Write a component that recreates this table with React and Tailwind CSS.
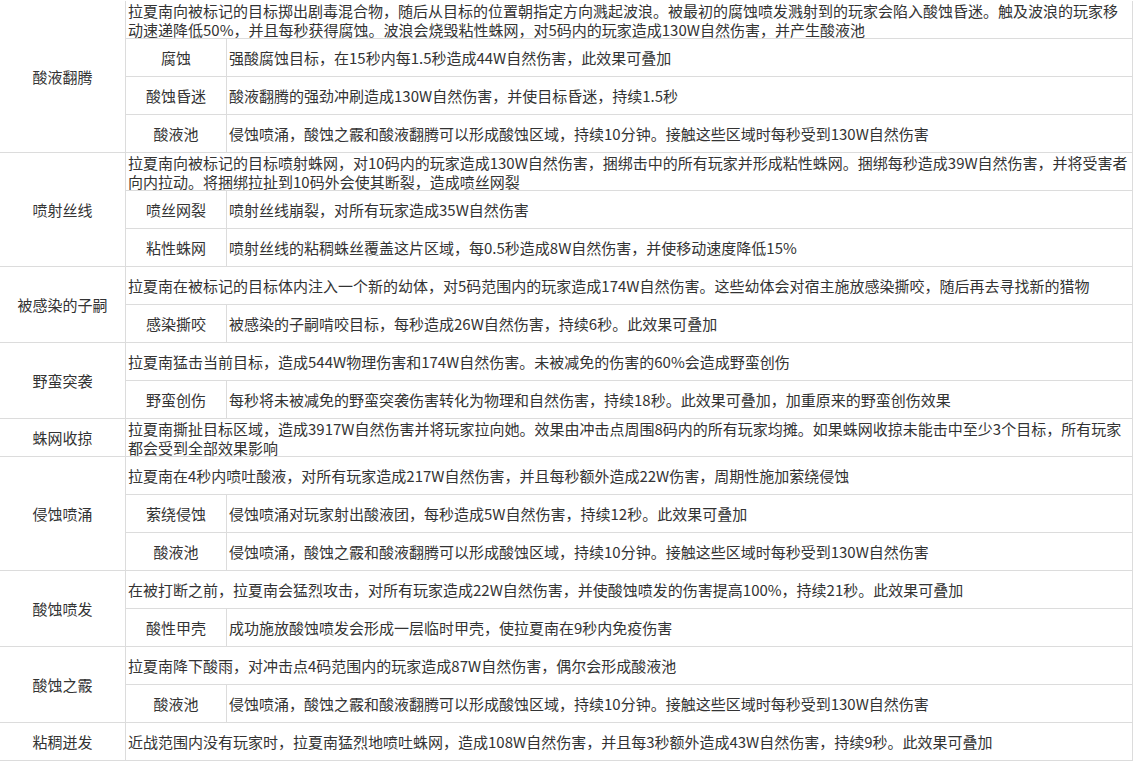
import React from 'react';

const POOL = '侵蚀喷涌，酸蚀之霰和酸液翻腾可以形成酸蚀区域，持续10分钟。接触这些区域时每秒受到130W自然伤害';

const skills = [
    {
        name: '酸液翻腾',
        desc: '拉夏南向被标记的目标掷出剧毒混合物，随后从目标的位置朝指定方向溅起波浪。被最初的腐蚀喷发溅射到的玩家会陷入酸蚀昏迷。触及波浪的玩家移动速递降低50%，并且每秒获得腐蚀。波浪会烧毁粘性蛛网，对5码内的玩家造成130W自然伤害，并产生酸液池',
        subs: [
            ['腐蚀', '强酸腐蚀目标，在15秒内每1.5秒造成44W自然伤害，此效果可叠加'],
            ['酸蚀昏迷', '酸液翻腾的强劲冲刷造成130W自然伤害，并使目标昏迷，持续1.5秒'],
            ['酸液池', POOL],
        ],
    },
    {
        name: '喷射丝线',
        desc: '拉夏南向被标记的目标喷射蛛网，对10码内的玩家造成130W自然伤害，捆绑击中的所有玩家并形成粘性蛛网。捆绑每秒造成39W自然伤害，并将受害者向内拉动。将捆绑拉扯到10码外会使其断裂，造成喷丝网裂',
        subs: [
            ['喷丝网裂', '喷射丝线崩裂，对所有玩家造成35W自然伤害'],
            ['粘性蛛网', '喷射丝线的粘稠蛛丝覆盖这片区域，每0.5秒造成8W自然伤害，并使移动速度降低15%'],
        ],
    },
    {
        name: '被感染的子嗣',
        desc: '拉夏南在被标记的目标体内注入一个新的幼体，对5码范围内的玩家造成174W自然伤害。这些幼体会对宿主施放感染撕咬，随后再去寻找新的猎物',
        subs: [['感染撕咬', '被感染的子嗣啃咬目标，每秒造成26W自然伤害，持续6秒。此效果可叠加']],
    },
    {
        name: '野蛮突袭',
        desc: '拉夏南猛击当前目标，造成544W物理伤害和174W自然伤害。未被减免的伤害的60%会造成野蛮创伤',
        subs: [['野蛮创伤', '每秒将未被减免的野蛮突袭伤害转化为物理和自然伤害，持续18秒。此效果可叠加，加重原来的野蛮创伤效果']],
    },
    {
        name: '蛛网收掠',
        desc: '拉夏南撕扯目标区域，造成3917W自然伤害并将玩家拉向她。效果由冲击点周围8码内的所有玩家均摊。如果蛛网收掠未能击中至少3个目标，所有玩家都会受到全部效果影响',
        subs: [],
    },
    {
        name: '侵蚀喷涌',
        desc: '拉夏南在4秒内喷吐酸液，对所有玩家造成217W自然伤害，并且每秒额外造成22W伤害，周期性施加萦绕侵蚀',
        subs: [
            ['萦绕侵蚀', '侵蚀喷涌对玩家射出酸液团，每秒造成5W自然伤害，持续12秒。此效果可叠加'],
            ['酸液池', POOL],
        ],
    },
    {
        name: '酸蚀喷发',
        desc: '在被打断之前，拉夏南会猛烈攻击，对所有玩家造成22W自然伤害，并使酸蚀喷发的伤害提高100%，持续21秒。此效果可叠加',
        subs: [['酸性甲壳', '成功施放酸蚀喷发会形成一层临时甲壳，使拉夏南在9秒内免疫伤害']],
    },
    {
        name: '酸蚀之霰',
        desc: '拉夏南降下酸雨，对冲击点4码范围内的玩家造成87W自然伤害，偶尔会形成酸液池',
        subs: [['酸液池', POOL]],
    },
    {
        name: '粘稠迸发',
        desc: '近战范围内没有玩家时，拉夏南猛烈地喷吐蛛网，造成108W自然伤害，并且每3秒额外造成43W自然伤害，持续9秒。此效果可叠加',
        subs: [],
    },
];

const spanClass = { 1: 'row-span-1', 2: 'row-span-2', 3: 'row-span-3', 4: 'row-span-4' };

const cell = 'border-r border-b border-[#dcdcdc] flex items-center';

export default function App() {
    return (
        <div
            className="bg-white pt-px text-[15px] leading-[19px] text-[#333]"
            style={{ fontFamily: '"Noto Sans CJK SC", "Noto Sans", sans-serif' }}
        >
            <div className="grid grid-cols-[126px_101px_1fr] auto-rows-[38px]">
                {skills.map((s) => (
                    <React.Fragment key={s.name}>
                        <div className={`${cell} ${spanClass[s.subs.length + 1]} justify-center`}>{s.name}</div>
                        <div className={`${cell} col-span-2 pl-[2px] pr-1`}>
                            <span>{s.desc}</span>
                        </div>
                        {s.subs.map(([n, d]) => (
                            <React.Fragment key={n}>
                                <div className={`${cell} justify-center`}>{n}</div>
                                <div className={`${cell} pl-[2px]`}>{d}</div>
                            </React.Fragment>
                        ))}
                    </React.Fragment>
                ))}
            </div>
        </div>
    );
}
